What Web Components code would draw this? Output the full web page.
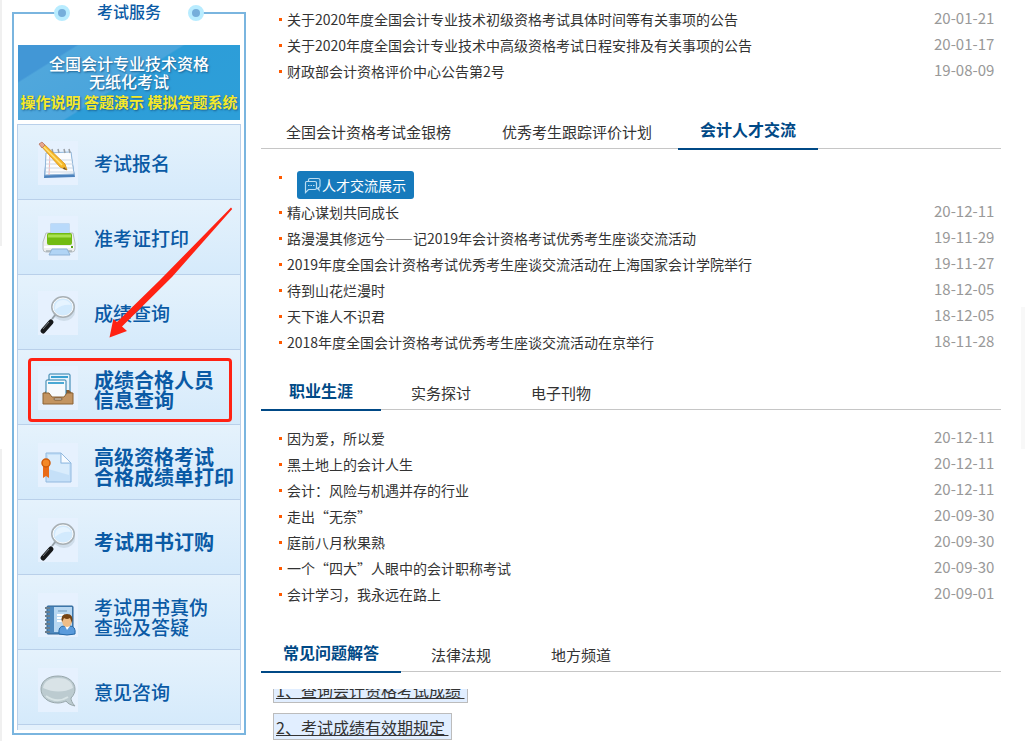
<!DOCTYPE html>
<html lang="zh-CN">
<head>
<meta charset="utf-8">
<title>考试服务</title>
<style>
  body {
    margin: 0;
    font-family: "Noto Sans CJK SC", "Noto Sans", sans-serif;
    font-size: 14px;
    color: #333;
    background:
      linear-gradient(#f0f0f0, #f0f0f0) 0 0 / 2px 246px no-repeat,
      linear-gradient(#f0f0f0, #f0f0f0) 0 449px / 2px 100% no-repeat,
      linear-gradient(#f8f8f8, #f8f8f8) 100% 307px / 4px 142px no-repeat,
      #fff;
  }
  .page {
    display: grid;
    grid-template-columns: 234px minmax(0, 1fr);
    gap: 15px;
    align-items: start;
    padding: 0 24px 0 12px;
  }
  main { padding-top: 6px; }
  tab-strip { margin: 26px 0 15px; }
  #career { margin-top: 16px; }
  #faq { margin-bottom: 17px; }
</style>
</head>
<body>
<div class="page">
  <service-panel heading="考试服务">
    <promo-banner slot="banner"></promo-banner>
    <service-item icon="notepad">考试报名</service-item>
    <service-item icon="printer">准考证打印</service-item>
    <service-item icon="lens">成绩查询</service-item>
    <service-item icon="tray" strong marked>成绩合格人员<br>信息查询</service-item>
    <service-item icon="cert" strong low>高级资格考试<br>合格成绩单打印</service-item>
    <service-item icon="lens" strong low>考试用书订购</service-item>
    <service-item icon="book" low>考试用书真伪<br>查验及答疑</service-item>
    <service-item icon="bubble" low>意见咨询</service-item>
  </service-panel>

  <main>
    <news-list id="notices"></news-list>
    <tab-strip id="talent" class="wide"></tab-strip>
    <news-list id="talentNews"><chip-button slot="lead">人才交流展示</chip-button></news-list>
    <tab-strip id="career"></tab-strip>
    <news-list id="careerNews"></news-list>
    <tab-strip id="faq"></tab-strip>
    <faq-ticker></faq-ticker>
  </main>
</div>

<script>
const ICONS = {
  notepad: `
    <path d="M8 13 L33 12 L37 36 L6 37 Z" fill="#4d83bd"/>
    <path d="M8 12 L33 11 L36 33 L7 34 Z" fill="#fbfcfe" stroke="#92b7da"/>
    <path d="M12 12 L11 34" stroke="#efb3b3"/>
    <path d="M8 19H34 M8 23H35 M8 27H35 M8 31H36" stroke="#ccd8e5"/>
    <path d="M14 8l1 4 M20 8l1 4 M26 8l1 4 M31 8l1 4" stroke="#9a9fa5" stroke-width="1.500"/>
    <path d="M3 5 L6 3 L27 23 L29 29 L22 26 Z" fill="#f7b928" stroke="#d68f1c" stroke-width="0.800"/>
    <path d="M5 5 L24 24" stroke="#ffe27c" stroke-width="1.500"/>
    <path d="M1 3 L4 1 L7 4 L4 7 Z" fill="#e8a78d" stroke="#b47561" stroke-width="0.800"/>
    <path d="M26 26 L29 29 L25 28 Z" fill="#6b4d2a"/>`,
  printer: `
    <rect x="13" y="8" width="18" height="14" fill="#b5d8fb" stroke="#9cc3ea"/>
    <path d="M8 17 H35 L37 27 V33 Q37 36 34 36 H8 Q5 36 5 33 V26 Z" fill="#eeefef" stroke="#b9c0c4"/>
    <rect x="9" y="17" width="25" height="12" rx="2" fill="#72bb12"/>
    <path d="M10 20 H33" stroke="#a9e150" stroke-width="3"/>
    <path d="M13 8 H31 V17 H13 Z" fill="#b9dafb"/>
    <path d="M6 31 H36" stroke="#fff" stroke-width="2"/>
    <path d="M8 35 H34" stroke="#8b979d"/>
    <path d="M14 33 H29 L32 39 H11 Z" fill="#b1d4f5" stroke="#8fb4d8"/>
    <path d="M33 31h2" stroke="#59a51c" stroke-width="2"/>`,
  lens: `
    <ellipse cx="26" cy="21" rx="11" ry="9" fill="#cfddea"/>
    <path d="M14 28 L18 23" stroke="#95a0a8" stroke-width="2"/>
    <path d="M5 40 L13 31" stroke="#17191b" stroke-width="5" stroke-linecap="round"/>
    <path d="M5 38 L11 31" stroke="#777d81" stroke-width="1"/>
    <ellipse cx="25" cy="16" rx="11" ry="10" fill="#d2eafd" stroke="#a8b0b5" stroke-width="2"/>
    <ellipse cx="25" cy="16" rx="10" ry="9" fill="none" stroke="#fafcfd"/>
    <path d="M17 16 Q18 9 25 9 Q31 9 33 14 Q24 13 17 19 Z" fill="#e6f4ff"/>`,
  tray: `
    <rect x="11" y="8" width="21" height="22" rx="1" fill="#e6f3fc" stroke="#287da9"/>
    <path d="M13 11H30" stroke="#3ba1d1" stroke-width="2"/>
    <path d="M5 28 L9 24 H31 L35 28 Z" fill="#865c33"/>
    <rect x="8" y="14" width="20" height="18" rx="1" fill="#f7fafc" stroke="#287da9"/>
    <path d="M10 17H26" stroke="#4aa9d4" stroke-width="2"/>
    <path d="M5 27 H11 L14 31 H26 L29 27 H35 V38 H5 Z" fill="#c39461" stroke="#8b6235"/>
    <rect x="16" y="32" width="8" height="2" rx="1" fill="#eee8d9" stroke="#76583a"/>`,
  cert: `
    <path d="M8 10 H23 L33 20 V39 H8 Z" fill="#c5e0f8" stroke="#92b9df"/>
    <path d="M10 12 H22 V21 H31 V32 L10 26 Z" fill="#d9ecfc"/>
    <path d="M23 10 V20 H33 Z" fill="#f7fbff" stroke="#92b9df"/>
    <path d="M5 23 H11 V35 L8 33 L5 35 Z" fill="#e96b17"/>
    <circle cx="8" cy="20" r="4" fill="#f48927" stroke="#cf5c0b" stroke-width="1.500"/>`,
  book: `
    <rect x="9" y="13" width="26" height="28" rx="1" fill="#4e88bd" stroke="#2a6295"/>
    <rect x="16" y="14" width="18" height="25" fill="#b9d8f2"/>
    <path d="M7 15h5 M7 19h5 M7 23h5 M7 27h5 M7 31h5 M7 35h5 M7 39h5" stroke="#6b7d8b" stroke-width="2"/>
    <path d="M20 18h9" stroke="#6e99bd"/>
    <path d="M19 22h7 M19 25h6 M19 28h6" stroke="#fff" stroke-width="2"/>
    <path d="M21 41 Q20 33 26 33 H32 Q38 33 37 41 Q29 43 21 41Z" fill="#5a9bdc" stroke="#2669a7"/>
    <path d="M27 33 L29 37 L32 33Z" fill="#fff"/>
    <ellipse cx="29" cy="28" rx="5" ry="6" fill="#efbd87"/>
    <path d="M24 29 Q22 21 29 21 Q36 21 34 30 L32 25 Q29 27 26 25Z" fill="#754414"/>`,
  bubble: `
    <path d="M20 8 C9 8 3 14 3 21 C3 29 10 35 20 35 C23 35 26 34 28 33 C30 36 33 37 37 38 C34 35 33 32 33 30 C36 27 37 24 37 21 C37 14 30 8 20 8Z" fill="#bccbd0" stroke="#98a7ab"/>
    <path d="M5 20 C6 13 12 10 20 10 C28 10 34 13 35 20 Q21 27 5 20Z" fill="#d9e3e7"/>
    <path d="M8 28 Q19 36 30 29" fill="none" stroke="#d8e4e6" stroke-width="2"/>`
};

class ServicePanel extends HTMLElement {
  connectedCallback() {
    this.attachShadow({ mode: 'open' }).innerHTML = `
      <style>
        :host {
          display: block;
          box-sizing: border-box;
          margin-top: 12px;
          padding: 0 3px 3px;
          border: 2px solid #7ab5df;
        }
        header {
          display: flex;
          align-items: center;
          justify-content: space-between;
          width: 150px;
          height: 26px;
          margin: -14px auto 0;
          background: linear-gradient(#fff, #fff) center / 134px 100% no-repeat;
        }
        h2 {
          margin: 0;
          padding-bottom: 4px;
          font-size: 16px;
          line-height: 22px;
          font-weight: 500;
          color: #0a5aa5;
        }
        .dot {
          width: 8px;
          height: 8px;
          border: 4px solid #b8ecff;
          border-radius: 50%;
          background: #76aedb;
        }
        .banner { margin: 19px 1px 4px; }
        .menu {
          position: relative;
          border: 1px solid #b9d0ea;
          border-width: 0 1px;
        }
        .end {
          height: 5px;
          border-top: 1px solid #b9d0ea;
          background: #e4f1fc;
        }
        .arrow {
          position: absolute;
          left: 91px;
          top: 83px;
          pointer-events: none;
        }
      </style>
      <header><span class="dot"></span><h2></h2><span class="dot"></span></header>
      <div class="banner"><slot name="banner"></slot></div>
      <nav class="menu">
        <slot></slot>
        <div class="end"></div>
        <svg class="arrow" width="124" height="131" viewBox="109 207 124 131">
          <path d="M231 207.500 L232.200 209 L172 277 L122 326.500 L127 331 L109.500 337.500 L113.300 319 L117 322 L160 280 Z" fill="#ff2213"/>
        </svg>
      </nav>`;
    this.shadowRoot.querySelector('h2').textContent = this.getAttribute('heading');
  }
}

class PromoBanner extends HTMLElement {
  connectedCallback() {
    this.attachShadow({ mode: 'open' }).innerHTML = `
      <style>
        :host { display: block; }
        a {
          display: block;
          box-sizing: border-box;
          height: 75px;
          padding-top: 9px;
          text-align: center;
          text-decoration: none;
          white-space: nowrap;
          font-size: 16px;
          line-height: 18px;
          font-weight: 500;
          color: #fff;
          text-shadow: 1px 1px 2px #1a5f8f;
          background: linear-gradient(148deg, #4297d6 17%, #50a7dc 18%, #4aa5dc 48%, #2d9dd8 49%, #2d9fd9);
        }
        span { display: block; }
        .links {
          margin-top: 3px;
          font-size: 15px;
          font-weight: 700;
          color: #f5e92a;
        }
      </style>
      <a href="#">
        <span>全国会计专业技术资格</span>
        <span>无纸化考试</span>
        <span class="links">操作说明 答题演示 模拟答题系统</span>
      </a>`;
  }
}

class ServiceItem extends HTMLElement {
  connectedCallback() {
    this.attachShadow({ mode: 'open' }).innerHTML = `
      <style>
        :host {
          display: block;
          position: relative;
          box-sizing: border-box;
          height: 75px;
          border-top: 1px solid #b9d0ea;
          background: linear-gradient(#e5f2fc, #d5eafb);
        }
        a {
          display: flex;
          align-items: center;
          gap: 16px;
          box-sizing: border-box;
          height: 100%;
          padding: 2px 0 0 20px;
          font-size: 19px;
          line-height: 20px;
          font-weight: 500;
          white-space: nowrap;
          color: #0a5aa5;
          text-decoration: none;
        }
        :host([low]) a { padding-top: 6px; }
        :host([strong]) a { font-size: 20px; font-weight: 700; }
        :host([strong]) span, :host([low]) span { padding-top: 4px; }
        svg { flex: none; background: #e6f1fe; }
        :host([marked])::after {
          content: "";
          position: absolute;
          inset: 8px 8px 2px 10px;
          border: 3px solid #ff2213;
          border-radius: 4px;
        }
      </style>
      <a href="#">
        <svg width="40" height="44" viewBox="0 0 40 44" fill="none">${ICONS[this.getAttribute('icon')]}</svg>
        <span><slot></slot></span>
      </a>`;
  }
}

class NewsList extends HTMLElement {
  constructor() {
    super();
    this.attachShadow({ mode: 'open' }).innerHTML = `
      <style>
        :host { display: block; padding-left: 18px; }
        ul { list-style: none; margin: 0; padding: 0; }
        li {
          display: flex;
          align-items: center;
          gap: 5px;
          line-height: 26px;
        }
        li::before {
          content: "";
          flex: none;
          width: 3px;
          height: 3px;
          background: #ff5a00;
        }
        .lead {
          height: 35px;
          align-items: flex-start;
          gap: 15px;
        }
        .lead::before { margin-top: 12px; }
        .lead slot { display: block; padding-top: 7px; }
        a {
          flex: 1;
          color: #333;
          text-decoration: none;
        }
        a:hover { color: #004986; }
        time {
          width: 60px;
          margin-right: 7px;
          font-size: 15px;
          line-height: 24px;
          padding-bottom: 2px;
          white-space: nowrap;
          color: #999;
        }
      </style>
      <ul></ul>`;
    this.$list = this.shadowRoot.querySelector('ul');
  }

  set items(items) {
    this.$list.innerHTML = '';
    if (this.querySelector('[slot=lead]')) {
      const lead = document.createElement('li');
      lead.className = 'lead';
      lead.innerHTML = '<slot name="lead"></slot>';
      this.$list.appendChild(lead);
    }
    items.forEach(([title, date]) => {
      const li = document.createElement('li');
      const link = document.createElement('a');
      link.href = '#';
      link.textContent = title;
      const time = document.createElement('time');
      time.dateTime = `20${date}`;
      time.textContent = date;
      li.append(link, time);
      this.$list.appendChild(li);
    });
  }
}

class ChipButton extends HTMLElement {
  connectedCallback() {
    this.attachShadow({ mode: 'open' }).innerHTML = `
      <style>
        :host { display: block; }
        button {
          display: flex;
          align-items: center;
          gap: 1px;
          height: 28px;
          padding: 0 8px 0 7px;
          border: 0;
          border-radius: 3px;
          font: inherit;
          line-height: 28px;
          color: #fff;
          background: #167abc;
          cursor: pointer;
        }
      </style>
      <button type="button">
        <svg width="17" height="17" viewBox="0 0 17 17" fill="none" stroke="#b9dcf2" stroke-width="1.200">
          <path d="M4.500 4 V3 Q4.500 1.500 6 1.500 H14 Q16 1.500 16 3 V9 Q16 10.500 14.500 10.500 L15 13 L13 11"/>
          <path d="M2.500 4.500 H11 Q12.500 4.500 12.500 6 V11 Q12.500 12.500 11 12.500 H4.500 L1.500 15.500 V6 Q1.500 4.500 2.500 4.500Z"/>
          <path d="M4 8.500h1.500 M6.500 8.500h1.500 M9 8.500h1.500"/>
        </svg>
        <slot></slot>
      </button>`;
  }
}

class TabStrip extends HTMLElement {
  constructor() {
    super();
    this.attachShadow({ mode: 'open' }).innerHTML = `
      <style>
        :host { display: block; }
        :host(.wide) .tabs { gap: 1px; }
        .tabs {
          display: flex;
          height: 38px;
          border-bottom: 1px solid #c6c6c6;
        }
        button {
          box-sizing: border-box;
          height: 40px;
          min-width: 120px;
          padding: 6px 25px 0;
          border: 0;
          border-bottom: 2px solid transparent;
          font: inherit;
          font-size: 15px;
          line-height: 24px;
          white-space: nowrap;
          color: #333;
          background: none;
          cursor: pointer;
        }
        button[aria-selected=true] {
          padding: 0 22px;
          font-size: 16px;
          font-weight: 700;
          color: #004986;
          border-color: #004986;
        }
      </style>
      <div class="tabs" role="tablist"></div>`;
    this.$tabs = this.shadowRoot.querySelector('.tabs');
  }

  setTabs(names, active) {
    this.$tabs.innerHTML = '';
    names.forEach((name, idx) => {
      const tab = document.createElement('button');
      tab.type = 'button';
      tab.setAttribute('role', 'tab');
      tab.setAttribute('aria-selected', idx === active);
      tab.textContent = name;
      tab.addEventListener('click', () => this.setTabs(names, idx));
      this.$tabs.appendChild(tab);
    });
  }
}

class FaqTicker extends HTMLElement {
  connectedCallback() {
    this.attachShadow({ mode: 'open' }).innerHTML = `
      <style>
        :host {
          display: block;
          height: 53px;
          padding-left: 12px;
          overflow: hidden;
        }
        /* the list is caught part way through its upward scroll */
        .track {
          display: flex;
          flex-direction: column;
          align-items: flex-start;
          gap: 10px;
          margin-top: -13px;
        }
        a {
          box-sizing: border-box;
          height: 27px;
          padding: 0 3px 0 2px;
          border: 1px solid #bcbcbc;
          font-size: 16px;
          line-height: 26px;
          white-space: pre;
          color: #333;
          background: #e1eeff;
        }
      </style>
      <div class="track">
        <a href="#">1、查询会计资格考试成绩 </a>
        <a href="#">2、考试成绩有效期规定 </a>
      </div>`;
  }
}

customElements.define('service-panel', ServicePanel);
customElements.define('promo-banner', PromoBanner);
customElements.define('service-item', ServiceItem);
customElements.define('news-list', NewsList);
customElements.define('chip-button', ChipButton);
customElements.define('tab-strip', TabStrip);
customElements.define('faq-ticker', FaqTicker);

const $ = (id) => document.getElementById(id);

$('notices').items = [
  ['关于2020年度全国会计专业技术初级资格考试具体时间等有关事项的公告', '20-01-21'],
  ['关于2020年度全国会计专业技术中高级资格考试日程安排及有关事项的公告', '20-01-17'],
  ['财政部会计资格评价中心公告第2号', '19-08-09']
];

$('talent').setTabs(['全国会计资格考试金银榜', '优秀考生跟踪评价计划', '会计人才交流'], 2);
$('talentNews').items = [
  ['精心谋划共同成长', '20-12-11'],
  ['路漫漫其修远兮——记2019年会计资格考试优秀考生座谈交流活动', '19-11-29'],
  ['2019年度全国会计资格考试优秀考生座谈交流活动在上海国家会计学院举行', '19-11-27'],
  ['待到山花烂漫时', '18-12-05'],
  ['天下谁人不识君', '18-12-05'],
  ['2018年度全国会计资格考试优秀考生座谈交流活动在京举行', '18-11-28']
];

$('career').setTabs(['职业生涯', '实务探讨', '电子刊物'], 0);
$('careerNews').items = [
  ['因为爱，所以爱', '20-12-11'],
  ['黑土地上的会计人生', '20-12-11'],
  ['会计：风险与机遇并存的行业', '20-12-11'],
  ['走出“无奈”', '20-09-30'],
  ['庭前八月秋果熟', '20-09-30'],
  ['一个“四大”人眼中的会计职称考试', '20-09-30'],
  ['会计学习，我永远在路上', '20-09-01']
];

$('faq').setTabs(['常见问题解答', '法律法规', '地方频道'], 0);
</script>
</body>
</html>
